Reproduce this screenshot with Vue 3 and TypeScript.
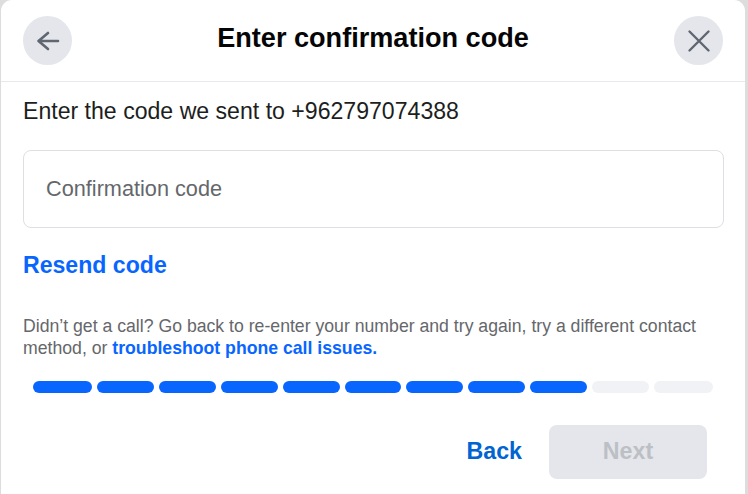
<script setup lang="ts">
const steps: boolean[] = [true, true, true, true, true, true, true, true, true, false, false]
</script>

<template>
  <div class="page">
    <div class="card">
      <header class="head">
        <button class="round" type="button" aria-label="Back">
          <svg width="24" height="24" viewBox="0 0 24 24" fill="none" stroke="#606770" stroke-width="2.6" stroke-linecap="round" stroke-linejoin="round">
            <path d="M22 12H2.5M12 4L2.5 12l9.5 8" />
          </svg>
        </button>
        <h1 class="title">Enter confirmation code</h1>
        <button class="round" type="button" aria-label="Close">
          <svg width="24" height="24" viewBox="0 0 24 24" fill="none" stroke="#606770" stroke-width="2.4" stroke-linecap="round">
            <path d="M2.5 2.5l19 19M21.5 2.5l-19 19" />
          </svg>
        </button>
      </header>
      <main class="body">
        <p class="lead">Enter the code we sent to +962797074388</p>
        <div class="field">Confirmation code</div>
        <a class="resend">Resend code</a>
        <p class="help">
          Didn’t get a call? Go back to re-enter your number and try again, try a different contact method, or
          <a class="help-link">troubleshoot phone call issues.</a>
        </p>
        <div class="progress">
          <span v-for="(on, i) in steps" :key="i" class="seg" :class="{ on }"></span>
        </div>
        <div class="actions">
          <a class="back">Back</a>
          <button class="next" type="button" disabled>Next</button>
        </div>
      </main>
    </div>
  </div>
</template>

<style>
html, body { margin: 0; background: #dddddd; }
</style>

<style scoped>
.page {
  width: 748px;
  height: 494px;
  padding: 0 3px 0 1px;
  box-sizing: border-box;
  overflow: hidden;
  font-family: "Liberation Sans", Arial, sans-serif;
}
.card {
  height: 494px;
  background: #fff;
  border-radius: 11px 11px 0 0;
}
.head {
  height: 82px;
  box-sizing: border-box;
  padding: 16px 22px 0;
  display: flex;
  justify-content: space-between;
  align-items: flex-start;
  border-bottom: 1px solid #e8e9ec;
}
.round {
  width: 49px;
  height: 49px;
  padding: 0;
  border: 0;
  border-radius: 50%;
  background: #e4e6eb;
  display: flex;
  align-items: center;
  justify-content: center;
}
.title {
  margin: 5px 0 0;
  font-size: 27.1px;
  line-height: 34px;
  font-weight: 700;
  color: #050505;
}
.body {
  padding: 0 21.5px 0 22px;
  display: flex;
  flex-direction: column;
}
.lead {
  margin: 16px 0 0;
  font-size: 23.1px;
  line-height: 27px;
  color: #1c1e21;
}
.field {
  margin-top: 25px;
  height: 78px;
  box-sizing: border-box;
  padding-left: 22px;
  display: flex;
  align-items: center;
  border: 1.5px solid #dddfe2;
  border-radius: 8px;
  font-size: 21.7px;
  color: #65676b;
}
.resend {
  margin-top: 24px;
  font-size: 23.1px;
  line-height: 27px;
  font-weight: 700;
  color: #0866ff;
}
.help {
  margin: 36px 0 0;
  font-size: 17.67px;
  line-height: 22px;
  color: #65676b;
}
.help-link {
  font-weight: 700;
  color: #0866ff;
}
.progress {
  margin: 22px 10.5px 0 10px;
  display: flex;
  gap: 5px;
}
.seg {
  flex: 1;
  height: 11.5px;
  border-radius: 6px;
  background: #f0f2f5;
}
.seg:first-child,
.seg:last-child {
  flex: 0 0 59px;
}
.seg.on {
  background: #0866ff;
}
.actions {
  margin-top: 32px;
  padding-right: 16.5px;
  display: flex;
  justify-content: flex-end;
  align-items: center;
}
.back {
  font-size: 23.2px;
  font-weight: 700;
  color: #0064d1;
  margin-right: 27px;
}
.next {
  width: 158px;
  height: 54px;
  border: 0;
  border-radius: 8px;
  background: #e4e6eb;
  color: #bcc0c4;
  font-family: inherit;
  font-size: 23.2px;
  font-weight: 700;
}
</style>
